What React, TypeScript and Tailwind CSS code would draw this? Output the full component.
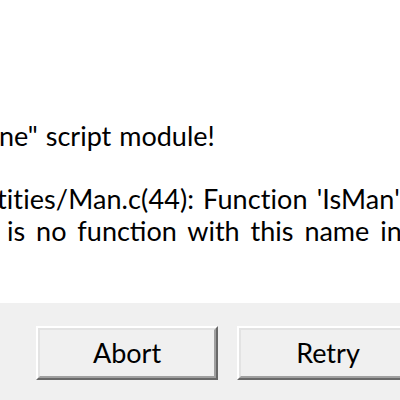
export default function App() {
  return (
    <div className="w-[400px] h-[400px] overflow-hidden flex flex-col bg-white text-black font-['Lato',sans-serif] text-[27px] leading-[32px]">
      <div className="h-[303px] bg-white flex flex-col pt-[120px] whitespace-nowrap">
        <div className="-ml-[1px] [word-spacing:1px]">ne" script module!</div>
        <div className="mt-[31px] -ml-[3px] [word-spacing:2px] tracking-[0.1px]">tities/Man.c(44): Function 'IsMan'</div>
        <div className="pl-[7px] [word-spacing:4px]">is no function with this name in</div>
      </div>
      <div className="flex-1 bg-[#f0f0f0] flex gap-[19px] pl-[36px] pt-[23px]">
        <Button label="Abort" />
        <Button label="Retry" />
      </div>
    </div>
  );
}

function Button({ label }: { label: string }) {
  return (
    <div className="w-[182px] h-[54px] shrink-0 border-2 border-t-white border-l-white border-r-[#696969] border-b-[#696969]">
      <div className="w-full h-full border-2 border-t-[#e3e3e3] border-l-[#e3e3e3] border-r-[#a0a0a0] border-b-[#a0a0a0] bg-[#f0f0f0] flex items-center justify-center">
        {label}
      </div>
    </div>
  );
}
